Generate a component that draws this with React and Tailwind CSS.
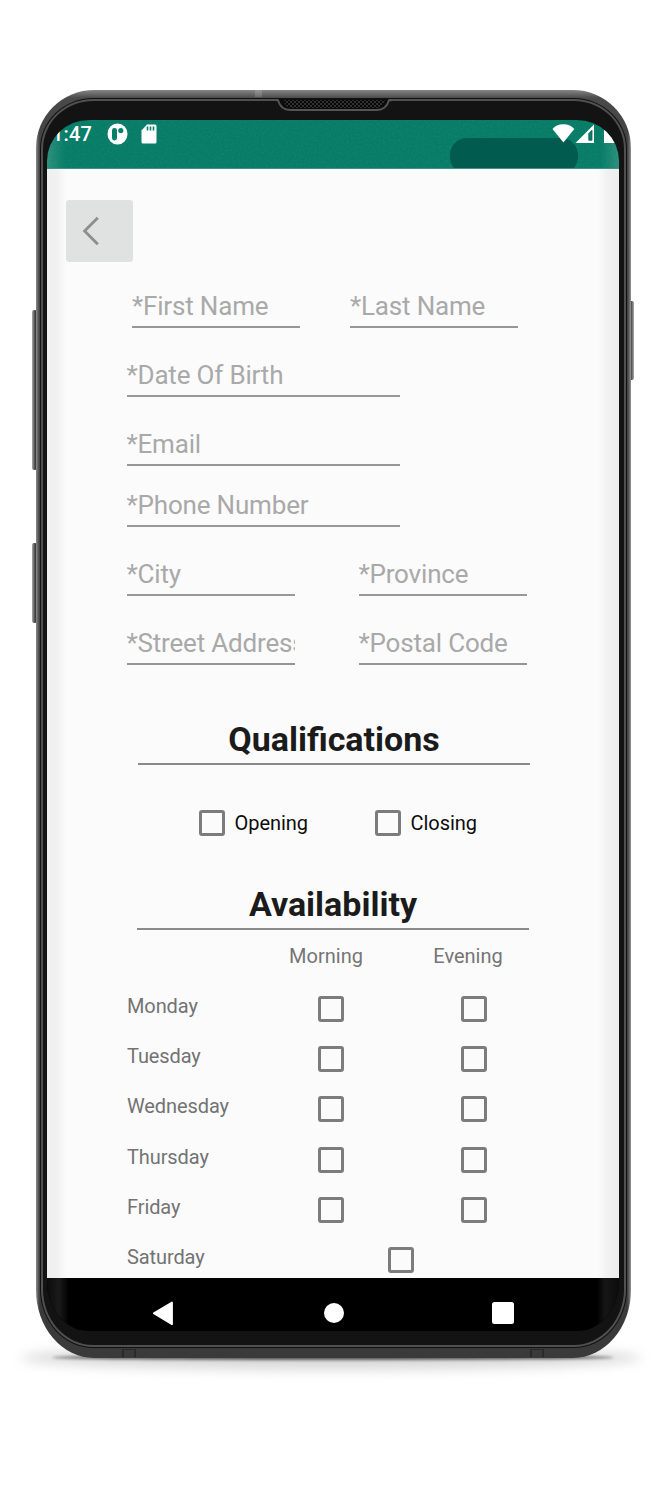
import React from "react";

function Field({ label, className }) {
  return (
    <div className={`flex items-end border-b-2 border-[#979797] ${className}`}>
      <span className="w-full overflow-hidden whitespace-nowrap pb-[4px] text-[26px] leading-[32px] tracking-[-0.18px] text-[#a9a9a9]">
        {label}
      </span>
    </div>
  );
}

function Box() {
  return <span className="block size-[26px] shrink-0 rounded-[3px] border-3 border-[#7c7c7c]" />;
}

function SectionTitle({ children, className }) {
  return (
    <h2
      className={`w-[392px] border-b-2 border-[#8a8a8a] text-center text-[34px] font-bold leading-[48px] text-[#1b1b1b] ${className}`}
    >
      {children}
    </h2>
  );
}

function StatusBar() {
  return (
    <header className="relative h-[49px] shrink-0 overflow-hidden border-b border-[#3c9585] bg-[#007b65]">
      <svg className="absolute inset-0 opacity-10" width="572" height="48">
        <filter id="grain">
          <feTurbulence type="fractalNoise" baseFrequency="0.5" numOctaves="2" />
          <feColorMatrix type="saturate" values="0" />
        </filter>
        <rect width="572" height="48" filter="url(#grain)" />
      </svg>
      <div className="relative flex h-[28px] items-center">
        <span className="ml-[5px] w-[40px] whitespace-nowrap text-[20px] font-medium leading-[28px] tracking-[0.2px] text-white">1:47</span>
        <svg className="ml-[15px]" width="21" height="22" viewBox="0 0 21 22">
          <ellipse cx="10.5" cy="11" rx="10" ry="10.5" fill="#fff" />
          <rect x="5" y="5" width="5" height="12.5" rx="2.4" fill="#04806b" />
          <circle cx="13.8" cy="7.5" r="2.6" fill="#04806b" />
        </svg>
        <svg className="ml-[13px]" width="16" height="20" viewBox="0 0 16 20">
          <path d="M6 0.5H14Q15.5 0.5 15.5 2V18Q15.5 19.5 14 19.5H2Q0.5 19.5 0.5 18V6.5Z" fill="#fff" />
          <path d="M6.5 2.5V6.5M9.5 2.5V6.5M12.5 2.5V6.5" stroke="#04806b" strokeWidth="1.6" />
        </svg>
      </div>
      <div className="absolute left-[402.5px] top-[18px] h-[36px] w-[128px] rounded-[17px] bg-[#015b4e]" />
      <svg className="absolute left-[504px] top-[3px]" width="68" height="22" viewBox="0 0 68 22">
        <path d="M1.5 6Q5 1.2 12.3 1.2Q19.6 1.2 23.3 6L12.4 19.5Z" fill="#fff" />
        <path d="M24.5 20L43 1.5V20Z" fill="#fff" />
        <path d="M37.8 10.5L41 7.2V17.2H37.8Z" fill="#04806b" stroke="#03604f" strokeWidth="0.8" />
        <rect x="53" y="7" width="15" height="13" fill="#fff" />
      </svg>
      <div className="absolute inset-y-0 left-0 w-[18px] bg-gradient-to-r from-white/15 to-white/0" />
      <div className="absolute inset-y-0 right-0 w-[18px] bg-gradient-to-r from-black/0 to-white/15" />
    </header>
  );
}

function NavBar() {
  return (
    <nav className="flex h-[52px] shrink-0 items-center bg-[#000] bg-[linear-gradient(90deg,#0c0c0c_0,#1a1a1a_12px,#000_22px,#000_550px,#161616_558px,#0c0c0c_572px)] pt-[18px]">
      <svg className="-mt-[1px] ml-[105px]" width="22" height="26" viewBox="0 0 22 26">
        <path d="M1.8 13.3L20 2.4V24.2Z" fill="#fff" stroke="#fff" strokeWidth="1.8" strokeLinejoin="round" />
      </svg>
      <span className="ml-[150px] block size-[20px] rounded-full bg-white" />
      <span className="ml-[147.5px] block size-[22px] rounded-[2.5px] bg-white" />
    </nav>
  );
}

const days = ["Monday", "Tuesday", "Wednesday", "Thursday", "Friday"];

function Form() {
  return (
    <main className="h-[1109px] shrink-0 overflow-hidden bg-[#fafafa] bg-[linear-gradient(90deg,#efefef_0,#f1f1f1_10px,#fbfbfb_19px,#fbfbfb_551px,#f1f1f1_561px,#ededed_572px)] pt-[31px]">
      <button className="ml-[19px] flex h-[62px] w-[67px] items-center rounded-[3px] bg-[#e0e1e1]">
        <svg className="ml-[16px]" width="18" height="30" viewBox="0 0 18 30">
          <path d="M15.8 1.8L2.6 15L15.8 28.2" fill="none" stroke="#8d8d8d" strokeWidth="2.8" />
        </svg>
      </button>
      <div className="flex pl-[85px] pt-[27px]">
        <Field label="*First Name" className="h-[39px] w-[168px]" />
        <Field label="*Last Name" className="ml-[50px] h-[39px] w-[168px]" />
      </div>
      <div className="pl-[79.5px]">
        <Field label="*Date Of Birth" className="h-[69px] w-[273px]" />
        <Field label="*Email" className="h-[69px] w-[273px]" />
        <Field label="*Phone Number" className="h-[61px] w-[273px]" />
        <div className="flex gap-[64px]">
          <Field label="*City" className="h-[69px] w-[168px]" />
          <Field label="*Province" className="h-[69px] w-[168px]" />
        </div>
        <div className="flex gap-[64px]">
          <Field label="*Street Address" className="h-[69px] w-[168px]" />
          <Field label="*Postal Code" className="h-[69px] w-[168px]" />
        </div>
      </div>
      <SectionTitle className="ml-[91px] mt-[50px]">Qualifications</SectionTitle>
      <div className="mt-[45px] flex h-[26px] items-center pl-[151.5px] text-[20px] tracking-[-0.05px] text-[#0c0c0c]">
        <label className="flex w-[176px] items-center gap-[10px]"><Box />Opening</label>
        <label className="flex items-center gap-[10px]"><Box />Closing</label>
      </div>
      <SectionTitle className="ml-[90px] mt-[44px]">Availability</SectionTitle>
      <div className="mt-[12px] flex pl-[208px] text-center text-[20px] leading-[28px] text-[#757575]">
        <span className="w-[142px]">Morning</span>
        <span className="w-[142px]">Evening</span>
      </div>
      <div className="mt-[26px] pl-[80px] text-[20px] tracking-[-0.1px] text-[#737373]">
        {days.map((day) => (
          <div key={day} className="flex h-[50.2px]">
            <span className="w-[191px] leading-[20px]">{day}</span>
            <span className="flex w-[143px]"><Box /></span>
            <Box />
          </div>
        ))}
        <div className="flex h-[50px]">
          <span className="w-[261px] leading-[20px]">Saturday</span>
          <Box />
        </div>
      </div>
    </main>
  );
}

function SideKey({ className }) {
  return <div className={`absolute w-[5px] rounded-[2px] ${className}`} />;
}

export default function App() {
  return (
    <div className="relative h-[1500px] w-[664px] overflow-hidden bg-white pl-[36px] pt-[90px] font-[Roboto,sans-serif]">
      <div className="absolute left-[20px] top-[1346px] h-[24px] w-[622px] rounded-[50%] bg-black/15 blur-[6px]" />
      <div className="absolute left-[52px] top-[1355px] h-[5px] w-[562px] rounded-[50%] bg-black/60 blur-[1.5px]" />
      <SideKey className="left-[32px] top-[310px] h-[160px] bg-[linear-gradient(90deg,#aaa,#444_60%,#333)]" />
      <SideKey className="left-[32px] top-[543px] h-[80px] bg-[linear-gradient(90deg,#aaa,#444_60%,#333)]" />
      <SideKey className="left-[629px] top-[301px] h-[79px] bg-[linear-gradient(90deg,#333,#444_40%,#aaa)]" />
      <div className="relative h-[1268px] w-[595px] rounded-[58px/58px_58px_68px_68px] bg-[linear-gradient(90deg,#8a8a8a_0,#777_1px,#484848_3px,transparent_4px,transparent_591px,#484848_592px,#777_594px,#999_595px),linear-gradient(180deg,#858585_0,#4a4a4a_8px,#404040_60px,#3a3a3a_100%)] px-[4px] pb-[10px] pt-[8px]">
        <div className="h-full rounded-[53px/51px_51px_59px_59px] bg-[#111] p-px">
          <div className="h-full rounded-[52px/50px_50px_58px_58px] bg-[#505050] p-[2px]">
            <div className="h-full rounded-[50px/48px_48px_56px_56px] bg-[#131313] pb-[14px] pl-[4px] pr-[5px] pt-[19px]">
              <div className="flex h-full flex-col overflow-hidden rounded-[42px/41px_41px_50px_50px] bg-black">
                <StatusBar />
                <Form />
                <NavBar />
              </div>
            </div>
          </div>
        </div>
        <svg className="absolute left-[238px] top-[7px]" width="120" height="16" viewBox="0 0 120 16">
          <defs>
            <pattern id="mesh" width="4" height="4" patternUnits="userSpaceOnUse">
              <rect width="4" height="4" fill="#080808" />
              <rect width="2" height="2" fill="#303030" />
              <rect x="2" y="2" width="2" height="2" fill="#303030" />
            </pattern>
          </defs>
          <path d="M4 2H115L113 7Q110 13 104 13H15Q9 13 6 7Z" fill="#0c0c0c" />
          <path d="M9 3H111Q108 11 102 11H18Q12 11 9 3Z" fill="url(#mesh)" />
          <path d="M2 3.2H4Q7 13 16 13H103Q112 13 115 3.2H118" fill="none" stroke="#555" strokeWidth="2" />
        </svg>
        <div className="absolute left-[219px] top-0 h-[7px] w-[7px] bg-white/15" />
        <div className="absolute bottom-px left-[86px] h-[8px] w-[14px] border-x-2 border-t border-[#2a2a2a]" />
        <div className="absolute bottom-px left-[494px] h-[8px] w-[14px] border-x-2 border-t border-[#2a2a2a]" />
      </div>
    </div>
  );
}
